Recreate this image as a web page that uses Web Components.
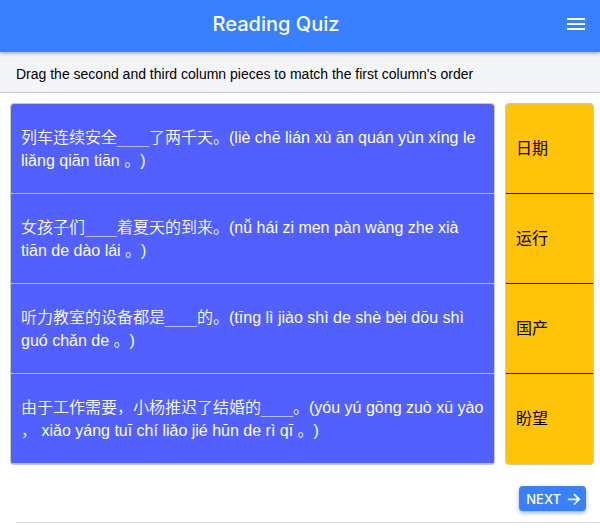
<!DOCTYPE html>
<html lang="en">
<head>
<meta charset="utf-8">
<meta name="viewport" content="width=device-width, initial-scale=1">
<title>Reading Quiz</title>
<style>
  body {
    margin: 0;
    background: #fff;
    color: #000;
    font-family: "Liberation Sans", "Noto Sans CJK SC", sans-serif;
    font-size: 16px;
    --primary: #3880ff;
    --line: #c8c7cc;
  }
</style>
</head>
<body>
<quiz-app></quiz-app>

<script>
const define = (name, html) => {
  const template = document.createElement('template');
  template.innerHTML = html.trim();
  customElements.define(name, class extends HTMLElement {
    constructor() {
      super();
      this.attachShadow({ mode: 'open' }).append(template.content.cloneNode(true));
    }
  });
};

define('quiz-header', `
  <style>
    :host {
      display: flex; align-items: center; height: 52px; position: relative; z-index: 1;
      background: var(--primary); color: #fff;
      box-shadow: 0 1px 4px rgba(0, 0, 0, .4);
    }
    h1 { flex: 1; margin: 0; padding-bottom: 4px; text-align: center;
      font: 500 20px/24px Inter, "Liberation Sans", sans-serif; }
    button { width: 48px; height: 48px; margin: 0 0 4px; padding: 0; border: 0;
      display: grid; place-items: center; background: none; color: inherit; cursor: pointer; }
    svg { display: block; }
  </style>
  <h1><slot></slot></h1>
  <button type="button" aria-label="Menu">
    <svg width="18" height="12" viewBox="0 0 18 12" fill="currentColor" aria-hidden="true">
      <path d="M0 0h18v2H0zM0 5h18v2H0zM0 10h18v2H0z"/>
    </svg>
  </button>
`);

define('quiz-hint', `
  <style>
    :host { display: block; padding: 12px 16px 8px; line-height: 20px; font-size: 14px;
      background: #f4f5f8; border-bottom: 1px solid var(--line); }
    p { margin: 0; }
  </style>
  <p><slot></slot></p>
`);

define('quiz-column', `
  <style>
    :host { display: grid; grid-auto-rows: 90px; border: 1px solid #c8c7cc;
      border-radius: 4px; overflow: hidden; background: var(--fill); color: var(--ink); }
  </style>
  <slot></slot>
`);

define('quiz-piece', `
  <style>
    :host { display: flex; align-items: center; padding: 0 8px 0 10px; line-height: 23px;
      border-bottom: 1px solid var(--rule); text-spacing-trim: space-all; }
    :host(:last-child) { border-bottom-color: var(--last-rule, var(--rule)); }
    p { margin: 0; }
  </style>
  <p><slot></slot></p>
`);

define('quiz-blank', `<style>
    :host { display: inline; font-family: "DejaVu Sans", sans-serif; line-height: 1; }
  </style><slot></slot>`);

define('next-button', `
  <style>
    :host { display: block; }
    button { display: flex; align-items: center; gap: 6px; height: 25px; padding: 0 5px 0 7px;
      border: 0; border-radius: 4px; background: var(--primary); color: #fff; cursor: pointer;
      font: 500 13px/16px Inter, "Liberation Sans", sans-serif;
      box-shadow: 0 2px 4px rgba(0, 0, 0, .3); }
    svg { display: block; }
  </style>
  <button type="button"><slot></slot>
    <svg width="14" height="14" viewBox="0 0 14 14" fill="none" stroke="currentColor" stroke-width="1.7" aria-hidden="true">
      <path d="M.8 7.3h11.4M7 2.1l5.2 5.2L7 12.5"/>
    </svg>
  </button>
`);

define('quiz-app', `
  <style>
    :host { display: block; }
    main { display: grid; grid-template-columns: minmax(0, 485fr) minmax(0, 89fr);
      gap: 10px; padding: 10px 6px 0 10px; }
    .prompts { --fill: #5260ff; --ink: #fff; --rule: #c8c7cc; font-weight: 350; }
    .answers { --fill: #ffc409; --ink: #000; --rule: #000; --last-rule: transparent; }
    .answers quiz-piece { cursor: grab; }
    footer { display: flex; justify-content: flex-end; margin-left: 16px;
      padding: 21px 14px 11px 0; border-bottom: 1px solid #dedede; }
  </style>
  <quiz-header>Reading Quiz</quiz-header>
  <quiz-hint>Drag the second and third column pieces to match the first column's order</quiz-hint>
  <main>
    <quiz-column class="prompts">
      <quiz-piece>列车连续安全<quiz-blank>____</quiz-blank>了两千天。(liè chē lián xù ān quán yùn xíng le liǎng qiān tiān 。)</quiz-piece>
      <quiz-piece>女孩子们<quiz-blank>____</quiz-blank>着夏天的到来。(nǚ hái zi men pàn wàng zhe xià tiān de dào lái 。)</quiz-piece>
      <quiz-piece>听力教室的设备都是<quiz-blank>____</quiz-blank>的。(tīng lì jiào shì de shè bèi dōu shì guó chǎn de 。)</quiz-piece>
      <quiz-piece>由于工作需要，小杨推迟了结婚的<quiz-blank>____</quiz-blank>。(yóu yú gōng zuò xū yào <br>， xiǎo yáng tuī chí liǎo jié hūn de rì qī 。)</quiz-piece>
    </quiz-column>
    <quiz-column class="answers">
      <quiz-piece draggable="true">日期</quiz-piece>
      <quiz-piece draggable="true">运行</quiz-piece>
      <quiz-piece draggable="true">国产</quiz-piece>
      <quiz-piece draggable="true">盼望</quiz-piece>
    </quiz-column>
  </main>
  <footer><next-button>NEXT</next-button></footer>
`);
</script>
</body>
</html>
